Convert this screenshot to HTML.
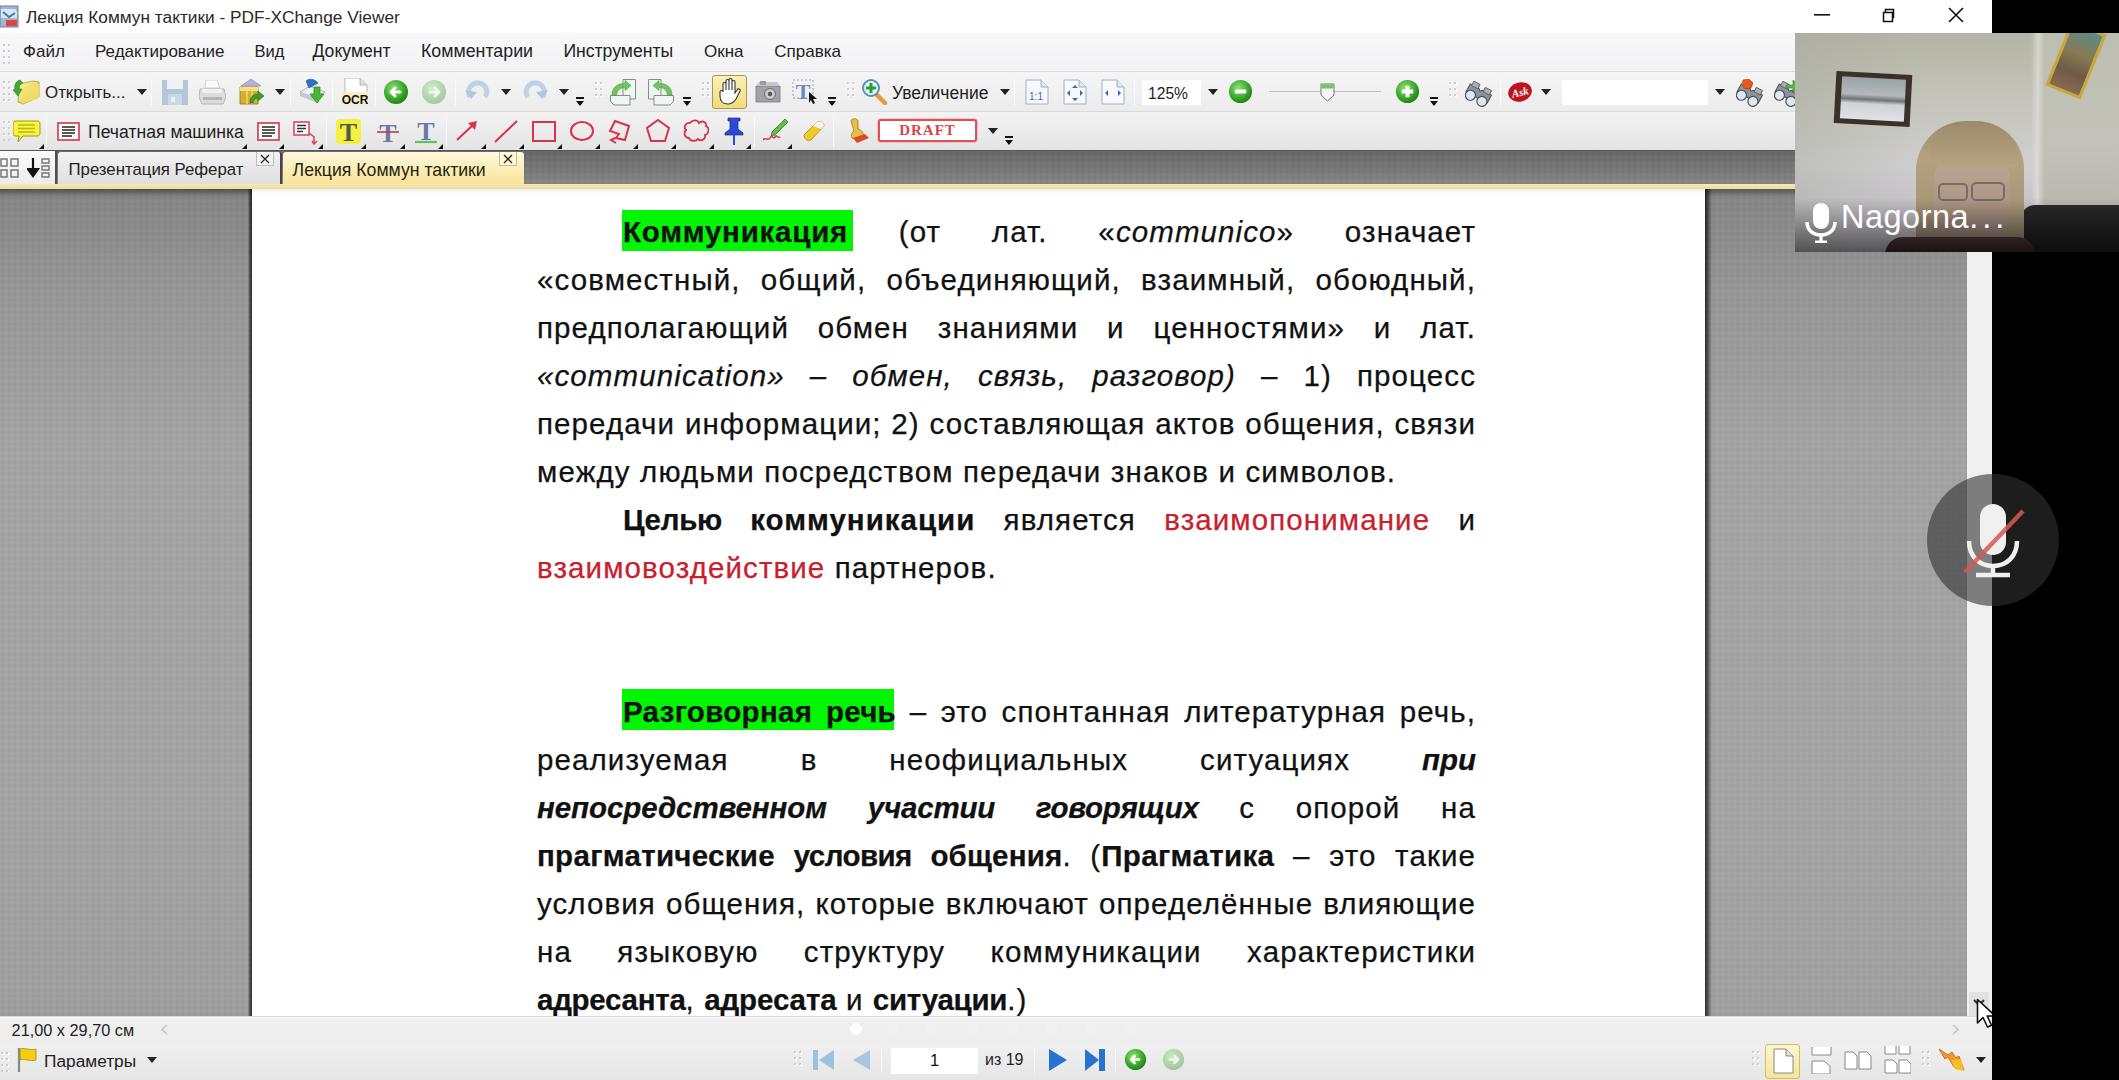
<!DOCTYPE html>
<html><head><meta charset="utf-8"><style>*{margin:0;padding:0;box-sizing:border-box}
html,body{width:2119px;height:1080px;overflow:hidden;background:#000}
body{position:relative;font-family:"Liberation Sans",sans-serif;color:#1e1e1e}
.a{position:absolute}
.tx{white-space:nowrap;line-height:1}
.ln{position:absolute;left:537px;width:939px;height:48px;font-size:29.5px;line-height:48px;letter-spacing:1.1px;white-space:nowrap;color:#111;-webkit-text-stroke:0.25px #111}
.j{text-align:justify;text-align-last:justify;white-space:normal}
.ind{left:623px;width:853px}
.b{font-weight:bold}
.i{font-style:italic}
.r{color:#c8202c;-webkit-text-stroke:0.25px #c8202c}
</style></head><body>
<div class="a" style="left:0;top:0;width:1992px;height:33px;background:#fff"></div>
<svg class="a" style="left:0px;top:5px;" width="19" height="23" viewBox="0 0 19 23"><rect x="0" y="1" width="18" height="21" fill="#9fb7d2" stroke="#6d7f94"/><path d="M1 4h14l2 3v6H1z" fill="#d8e6f2"/><path d="M3 7l6 5 6-4" stroke="#3f78b5" stroke-width="2" fill="none"/><rect x="6" y="15" width="11" height="6" fill="#d44"/></svg>
<div class="a tx" style="left:26px;top:9px;font-size:17.3px;color:#2a2a2a;">Лекция Коммун тактики - PDF-XChange Viewer</div>
<svg class="a" style="left:1814px;top:14px;" width="16" height="2" viewBox="0 0 16 2"><rect width="16" height="1.6" fill="#111"/></svg>
<svg class="a" style="left:1880px;top:7px;" width="16" height="16" viewBox="0 0 16 16"><path d="M3.5 5.5h9v9h-9z M5.5 5.5v-3h8v8h-1" fill="none" stroke="#111" stroke-width="1.5"/></svg>
<svg class="a" style="left:1948px;top:7px;" width="16" height="16" viewBox="0 0 16 16"><path d="M1 1L15 15M15 1L1 15" stroke="#111" stroke-width="1.6"/></svg>
<div class="a" style="left:0;top:33px;width:1992px;height:39px;background:linear-gradient(#f9f9fb,#f2f2f4);border-bottom:1px solid #dadada"></div>
<svg class="a" style="left:3px;top:44px;" width="8" height="20" viewBox="0 0 8 20"><rect x="1" y="1" width="2" height="2" fill="#fff"/><rect x="0" y="0" width="2" height="2" fill="#cdcdcd"/><rect x="6" y="1" width="2" height="2" fill="#fff"/><rect x="5" y="0" width="2" height="2" fill="#cdcdcd"/><rect x="1" y="7" width="2" height="2" fill="#fff"/><rect x="0" y="6" width="2" height="2" fill="#cdcdcd"/><rect x="6" y="7" width="2" height="2" fill="#fff"/><rect x="5" y="6" width="2" height="2" fill="#cdcdcd"/><rect x="1" y="13" width="2" height="2" fill="#fff"/><rect x="0" y="12" width="2" height="2" fill="#cdcdcd"/><rect x="6" y="13" width="2" height="2" fill="#fff"/><rect x="5" y="12" width="2" height="2" fill="#cdcdcd"/><rect x="1" y="19" width="2" height="2" fill="#fff"/><rect x="0" y="18" width="2" height="2" fill="#cdcdcd"/><rect x="6" y="19" width="2" height="2" fill="#fff"/><rect x="5" y="18" width="2" height="2" fill="#cdcdcd"/></svg>
<div class="a tx" style="left:23px;top:43.2px;font-size:17.0px;color:#222;">Файл</div>
<div class="a tx" style="left:95px;top:43.2px;font-size:17.0px;color:#222;">Редактирование</div>
<div class="a tx" style="left:254.5px;top:43.2px;font-size:16.5px;color:#222;">Вид</div>
<div class="a tx" style="left:312.5px;top:43.2px;font-size:17.6px;color:#222;">Документ</div>
<div class="a tx" style="left:421px;top:43.2px;font-size:17.8px;color:#222;">Комментарии</div>
<div class="a tx" style="left:563.4px;top:43.2px;font-size:17.6px;color:#222;">Инструменты</div>
<div class="a tx" style="left:704px;top:43.2px;font-size:17.0px;color:#222;">Окна</div>
<div class="a tx" style="left:774.3px;top:43.2px;font-size:17.0px;color:#222;">Справка</div>
<div class="a" style="left:0;top:72px;width:1992px;height:40px;background:linear-gradient(#f5f5f5,#ececec);border-bottom:1px solid #d9d9d9"></div>
<svg class="a" style="left:3px;top:81px;" width="8" height="22" viewBox="0 0 8 22"><rect x="1" y="1" width="2" height="2" fill="#fff"/><rect x="0" y="0" width="2" height="2" fill="#cdcdcd"/><rect x="6" y="1" width="2" height="2" fill="#fff"/><rect x="5" y="0" width="2" height="2" fill="#cdcdcd"/><rect x="1" y="7" width="2" height="2" fill="#fff"/><rect x="0" y="6" width="2" height="2" fill="#cdcdcd"/><rect x="6" y="7" width="2" height="2" fill="#fff"/><rect x="5" y="6" width="2" height="2" fill="#cdcdcd"/><rect x="1" y="13" width="2" height="2" fill="#fff"/><rect x="0" y="12" width="2" height="2" fill="#cdcdcd"/><rect x="6" y="13" width="2" height="2" fill="#fff"/><rect x="5" y="12" width="2" height="2" fill="#cdcdcd"/><rect x="1" y="19" width="2" height="2" fill="#fff"/><rect x="0" y="18" width="2" height="2" fill="#cdcdcd"/><rect x="6" y="19" width="2" height="2" fill="#fff"/><rect x="5" y="18" width="2" height="2" fill="#cdcdcd"/></svg>
<svg class="a" style="left:13px;top:78px;" width="28" height="28" viewBox="0 0 28 28"><defs><linearGradient id="fo" x1="0" y1="0" x2="1" y2="1"><stop offset="0" stop-color="#fff6a8"/><stop offset="1" stop-color="#d9c23a"/></linearGradient></defs>
<path d="M6 6l14-3 6 1v15l-16 7-5-2z" fill="url(#fo)" stroke="#b39c2a" stroke-width="0.8"/>
<path d="M9 10l17-4v14l-17 6z" fill="#f2e06a" opacity="0.8"/>
<path d="M7 2c-4 1-6 5-5 9l-2 1 5 6 4-7-3 0c0-3 1-5 4-6z" fill="#3faa36" stroke="#2a7f26" stroke-width="0.6"/></svg>
<div class="a tx" style="left:45px;top:84.5px;font-size:16.9px;color:#1e1e1e;">Открыть...</div>
<svg class="a" style="left:137px;top:89px;" width="10" height="6" viewBox="0 0 10 6"><path d="M0 0h10L5 6z" fill="#222"/></svg>
<div class="a" style="left:151px;top:78px;width:1px;height:28px;background:#d2d2d2;border-right:1px solid #fafafa"></div>
<svg class="a" style="left:162px;top:80px;" width="26" height="25" viewBox="0 0 26 25"><path d="M0 0h26v25H0z" fill="#b4c6d8"/><rect x="5" y="0" width="16" height="9" fill="#eef2f6"/><rect x="6" y="14" width="14" height="11" fill="#cbd8e4"/><rect x="9" y="17" width="4" height="5" fill="#e8eef4"/></svg>
<svg class="a" style="left:199px;top:80px;" width="27" height="25" viewBox="0 0 27 25"><path d="M7 0h11l3 8H6z" fill="#fbfbfd" stroke="#c2c2ca" stroke-width="0.8"/><path d="M1 9h24l2 8-3 7H3l-3-7z" fill="#dcdcdc" stroke="#a8a8a8" stroke-width="0.8"/><path d="M4 17h19v3H4z" fill="#b4b4b4"/><path d="M3 9h20v4H3z" fill="#f0f0f0"/></svg>
<svg class="a" style="left:238px;top:78px;" width="26" height="27" viewBox="0 0 26 27"><path d="M3 8L13 1l10 7z" fill="#b9b0d8" stroke="#8e85b0" stroke-width="0.6"/><path d="M2 9h18v17H2z" fill="#d8ae2e" stroke="#96701a" stroke-width="0.8"/><path d="M2 9h18v4H2z" fill="#f2df90"/><path d="M9 9v17M14 9v17" stroke="#ffe27a" stroke-width="1.2"/><path d="M12 25c0-6 3-9 8-9v-3l6 5-6 5v-3c-3 0-5 2-5 5z" fill="#3d9e33" stroke="#25701d" stroke-width="0.6"/></svg>
<svg class="a" style="left:275px;top:89px;" width="10" height="6" viewBox="0 0 10 6"><path d="M0 0h10L5 6z" fill="#222"/></svg>
<div class="a" style="left:290px;top:78px;width:1px;height:28px;background:#d2d2d2;border-right:1px solid #fafafa"></div>
<svg class="a" style="left:299px;top:78px;" width="27" height="28" viewBox="0 0 27 28"><path d="M1 14l10-6 15 6-10 6z" fill="#eef1f5" stroke="#9aa3ad" stroke-width="0.8"/><path d="M1 14v4l15 6v-4z" fill="#c2c8cf"/><path d="M7 3c3-3 9-2 12 2l-9 5z" fill="#2a74c8" stroke="#1c4e90" stroke-width="0.6"/><path d="M15 9h6v7h4l-7 9-7-9h4z" fill="#49b43a" stroke="#2a7d22" stroke-width="0.7"/></svg>
<div class="a" style="left:332px;top:78px;width:1px;height:28px;background:#d2d2d2;border-right:1px solid #fafafa"></div>
<svg class="a" style="left:342px;top:78px;" width="26" height="27" viewBox="0 0 26 27"><path d="M3 0h15l7 7v12H3z" fill="#fff" stroke="#aaa" stroke-width="0.8"/><path d="M18 0v7h7" fill="#ddd" stroke="#aaa" stroke-width="0.8"/><rect x="0" y="14" width="26" height="13" fill="#f6ecc6"/><text x="13" y="25.5" text-anchor="middle" font-family="Liberation Sans" font-weight="bold" font-size="12" fill="#111">OCR</text></svg>
<div class="a" style="left:375px;top:78px;width:1px;height:28px;background:#d2d2d2;border-right:1px solid #fafafa"></div>
<svg class="a" style="left:383px;top:79px;" width="26" height="26" viewBox="0 0 26 26"><defs><radialGradient id="gc38379" cx="40%" cy="35%" r="70%"><stop offset="0" stop-color="#8fe27a"/><stop offset="0.6" stop-color="#3daa2c"/><stop offset="1" stop-color="#1d7a14"/></radialGradient></defs><g opacity="1"><circle cx="13" cy="13" r="12" fill="url(#gc38379)"/><path d="M17 13H9M12 9l-4 4 4 4" stroke="#fff" stroke-width="3" fill="none" stroke-linecap="round" stroke-linejoin="round"/></g></svg>
<svg class="a" style="left:421px;top:79px;" width="26" height="26" viewBox="0 0 26 26"><defs><radialGradient id="gc42179" cx="40%" cy="35%" r="70%"><stop offset="0" stop-color="#8fe27a"/><stop offset="0.6" stop-color="#3daa2c"/><stop offset="1" stop-color="#1d7a14"/></radialGradient></defs><g opacity="0.35"><circle cx="13" cy="13" r="12" fill="url(#gc42179)"/><path d="M9 13h8M14 9l4 4-4 4" stroke="#fff" stroke-width="3" fill="none" stroke-linecap="round" stroke-linejoin="round"/></g></svg>
<div class="a" style="left:455px;top:78px;width:1px;height:28px;background:#d2d2d2;border-right:1px solid #fafafa"></div>
<svg class="a" style="left:465px;top:80px;opacity:.9" width="26" height="24" viewBox="0 0 26 24"><path d="M5 17c-4-8 2-15 9-14 7 1 10 9 6 14" fill="none" stroke="#b8cfe6" stroke-width="5"/><path d="M0 10l6 9 6-7z" fill="#a8c2de"/></svg>
<svg class="a" style="left:501px;top:89px;" width="10" height="6" viewBox="0 0 10 6"><path d="M0 0h10L5 6z" fill="#222"/></svg>
<svg class="a" style="left:522px;top:80px;opacity:.9" width="26" height="24" viewBox="0 0 26 24"><path d="M21 17c4-8-2-15-9-14-7 1-10 9-6 14" fill="none" stroke="#b8cfe6" stroke-width="5"/><path d="M26 10l-6 9-6-7z" fill="#a8c2de"/></svg>
<svg class="a" style="left:559px;top:89px;" width="10" height="6" viewBox="0 0 10 6"><path d="M0 0h10L5 6z" fill="#222"/></svg>
<svg class="a" style="left:575px;top:97px;" width="10" height="10" viewBox="0 0 10 10"><rect x="1" y="0" width="8" height="2" fill="#111"/><path d="M1 4h8L5 9z" fill="#111"/></svg>
<svg class="a" style="left:595px;top:82px;" width="8" height="18" viewBox="0 0 8 18"><rect x="1" y="1" width="2" height="2" fill="#fff"/><rect x="0" y="0" width="2" height="2" fill="#cdcdcd"/><rect x="6" y="1" width="2" height="2" fill="#fff"/><rect x="5" y="0" width="2" height="2" fill="#cdcdcd"/><rect x="1" y="7" width="2" height="2" fill="#fff"/><rect x="0" y="6" width="2" height="2" fill="#cdcdcd"/><rect x="6" y="7" width="2" height="2" fill="#fff"/><rect x="5" y="6" width="2" height="2" fill="#cdcdcd"/><rect x="1" y="13" width="2" height="2" fill="#fff"/><rect x="0" y="12" width="2" height="2" fill="#cdcdcd"/><rect x="6" y="13" width="2" height="2" fill="#fff"/><rect x="5" y="12" width="2" height="2" fill="#cdcdcd"/><rect x="1" y="19" width="2" height="2" fill="#fff"/><rect x="0" y="18" width="2" height="2" fill="#cdcdcd"/><rect x="6" y="19" width="2" height="2" fill="#fff"/><rect x="5" y="18" width="2" height="2" fill="#cdcdcd"/></svg>
<svg class="a" style="left:610px;top:79px;" width="27" height="27" viewBox="0 0 27 27"><g ><path d="M13 0.5h12.5v19.5H13z" fill="#eef6f4" stroke="#8a8a8a" stroke-width="1"/><path d="M0.5 16.5h19.5v9.5H4l-3.5-3.5z" fill="#f2f6f6" stroke="#8a8a8a" stroke-width="1"/><path d="M2 16c0-8 6-12 13-11.5V1.5l6 5-6 5V8.5c-5 0-8 3-8.5 7.5z" fill="#62c24e" stroke="#3e9a32" stroke-width="0.6" opacity=".9"/></g></svg>
<svg class="a" style="left:647px;top:79px;" width="27" height="27" viewBox="0 0 27 27"><g transform="translate(27 0) scale(-1 1)"><path d="M13 0.5h12.5v19.5H13z" fill="#eef6f4" stroke="#8a8a8a" stroke-width="1"/><path d="M0.5 16.5h19.5v9.5H4l-3.5-3.5z" fill="#f2f6f6" stroke="#8a8a8a" stroke-width="1"/><path d="M2 16c0-8 6-12 13-11.5V1.5l6 5-6 5V8.5c-5 0-8 3-8.5 7.5z" fill="#62c24e" stroke="#3e9a32" stroke-width="0.6" opacity=".9"/></g></svg>
<svg class="a" style="left:682px;top:97px;" width="10" height="10" viewBox="0 0 10 10"><rect x="1" y="0" width="8" height="2" fill="#111"/><path d="M1 4h8L5 9z" fill="#111"/></svg>
<svg class="a" style="left:702px;top:82px;" width="8" height="18" viewBox="0 0 8 18"><rect x="1" y="1" width="2" height="2" fill="#fff"/><rect x="0" y="0" width="2" height="2" fill="#cdcdcd"/><rect x="6" y="1" width="2" height="2" fill="#fff"/><rect x="5" y="0" width="2" height="2" fill="#cdcdcd"/><rect x="1" y="7" width="2" height="2" fill="#fff"/><rect x="0" y="6" width="2" height="2" fill="#cdcdcd"/><rect x="6" y="7" width="2" height="2" fill="#fff"/><rect x="5" y="6" width="2" height="2" fill="#cdcdcd"/><rect x="1" y="13" width="2" height="2" fill="#fff"/><rect x="0" y="12" width="2" height="2" fill="#cdcdcd"/><rect x="6" y="13" width="2" height="2" fill="#fff"/><rect x="5" y="12" width="2" height="2" fill="#cdcdcd"/><rect x="1" y="19" width="2" height="2" fill="#fff"/><rect x="0" y="18" width="2" height="2" fill="#cdcdcd"/><rect x="6" y="19" width="2" height="2" fill="#fff"/><rect x="5" y="18" width="2" height="2" fill="#cdcdcd"/></svg>
<div class="a" style="left:712px;top:75px;width:35px;height:34px;border:1.5px solid #a8955a;border-radius:3px;background:linear-gradient(#fbf1b8,#f2dc78)"></div>
<svg class="a" style="left:717px;top:78px;" width="26" height="28" viewBox="0 0 26 28"><path d="M6 13V6c0-2 3-2 3 0v6V3c0-2 3-2 3 0v9V2c0-2 3-2 3 0v10V4c0-2 3-2 3 0v11l2-3c1-2 4-1 3 1l-4 8c-2 3-4 5-8 5-5 0-8-3-8-8v-4c0-2 3-2 3 0z" fill="#fff" stroke="#333" stroke-width="1.1"/></svg>
<svg class="a" style="left:755px;top:80px;" width="26" height="24" viewBox="0 0 26 24"><path d="M1 6h24v16H1z" fill="#a2a2aa" stroke="#76767e" stroke-width="0.8"/><path d="M1 6l3-4h18l3 4z" fill="#c6c6cc"/><rect x="5" y="1" width="6" height="4" fill="#9a9aa2"/><circle cx="15" cy="14" r="5.5" fill="#c8c8ce" stroke="#6a6a70" stroke-width="1"/><circle cx="15" cy="14" r="2.2" fill="#555"/></svg>
<svg class="a" style="left:792px;top:78px;" width="26" height="27" viewBox="0 0 26 27"><rect x="1" y="2" width="20" height="18" fill="none" stroke="#8aa0c0" stroke-dasharray="2 2"/><text x="11" y="21" text-anchor="middle" font-family="Liberation Serif" font-weight="bold" font-size="22" fill="#6a8ac0">T</text><path d="M17 14l8 7-4 0 2 4-2 1-2-4-2 3z" fill="#111"/></svg>
<svg class="a" style="left:827px;top:97px;" width="10" height="10" viewBox="0 0 10 10"><rect x="1" y="0" width="8" height="2" fill="#111"/><path d="M1 4h8L5 9z" fill="#111"/></svg>
<svg class="a" style="left:847px;top:82px;" width="8" height="18" viewBox="0 0 8 18"><rect x="1" y="1" width="2" height="2" fill="#fff"/><rect x="0" y="0" width="2" height="2" fill="#cdcdcd"/><rect x="6" y="1" width="2" height="2" fill="#fff"/><rect x="5" y="0" width="2" height="2" fill="#cdcdcd"/><rect x="1" y="7" width="2" height="2" fill="#fff"/><rect x="0" y="6" width="2" height="2" fill="#cdcdcd"/><rect x="6" y="7" width="2" height="2" fill="#fff"/><rect x="5" y="6" width="2" height="2" fill="#cdcdcd"/><rect x="1" y="13" width="2" height="2" fill="#fff"/><rect x="0" y="12" width="2" height="2" fill="#cdcdcd"/><rect x="6" y="13" width="2" height="2" fill="#fff"/><rect x="5" y="12" width="2" height="2" fill="#cdcdcd"/><rect x="1" y="19" width="2" height="2" fill="#fff"/><rect x="0" y="18" width="2" height="2" fill="#cdcdcd"/><rect x="6" y="19" width="2" height="2" fill="#fff"/><rect x="5" y="18" width="2" height="2" fill="#cdcdcd"/></svg>
<svg class="a" style="left:861px;top:78px;" width="27" height="27" viewBox="0 0 27 27"><path d="M15 16l9 9" stroke="#e39a3a" stroke-width="4.5" stroke-linecap="round"/><circle cx="10" cy="10" r="8" fill="#e7f3fb" stroke="#5d8fb2" stroke-width="2"/><path d="M10 5v10M5 10h10" stroke="#23a12c" stroke-width="3"/></svg>
<div class="a tx" style="left:892px;top:84.5px;font-size:17.5px;color:#1e1e1e;">Увеличение</div>
<svg class="a" style="left:1000px;top:89px;" width="10" height="6" viewBox="0 0 10 6"><path d="M0 0h10L5 6z" fill="#222"/></svg>
<div class="a" style="left:1014px;top:78px;width:1px;height:28px;background:#d2d2d2;border-right:1px solid #fafafa"></div>
<svg class="a" style="left:1025px;top:79px;" width="24" height="26" viewBox="0 0 24 26"><path d="M1 1h15l7 7v17H1z" fill="#f7f9fc" stroke="#9eb0c6" stroke-width="1"/><path d="M16 1v7h7" fill="#dfe7f0" stroke="#9eb0c6" stroke-width="1"/><text x="11" y="21" text-anchor="middle" font-family="Liberation Sans" font-size="10" fill="#3a6ab0">1:1</text></svg>
<svg class="a" style="left:1063px;top:79px;" width="24" height="26" viewBox="0 0 24 26"><path d="M1 1h15l7 7v17H1z" fill="#f7f9fc" stroke="#9eb0c6" stroke-width="1"/><path d="M16 1v7h7" fill="#dfe7f0" stroke="#9eb0c6" stroke-width="1"/><path d="M12 6l3 3h-6zM12 22l3-3h-6zM4 14l3-3v6zM20 14l-3-3v6z" fill="#3a6ab0"/></svg>
<svg class="a" style="left:1101px;top:79px;" width="24" height="26" viewBox="0 0 24 26"><path d="M1 1h15l7 7v17H1z" fill="#f7f9fc" stroke="#9eb0c6" stroke-width="1"/><path d="M16 1v7h7" fill="#dfe7f0" stroke="#9eb0c6" stroke-width="1"/><path d="M4 14l3-3v6zM20 14l-3-3v6z" fill="#3a6ab0"/></svg>
<div class="a" style="left:1134px;top:78px;width:1px;height:28px;background:#d2d2d2;border-right:1px solid #fafafa"></div>
<div class="a" style="left:1142px;top:80px;width:59px;height:25px;background:#fff"></div>
<div class="a tx" style="left:1148px;top:84.5px;font-size:15.6px;color:#1e1e1e;font-size:17px;transform:scaleX(.92);transform-origin:0 0">125%</div>
<svg class="a" style="left:1208px;top:89px;" width="10" height="6" viewBox="0 0 10 6"><path d="M0 0h10L5 6z" fill="#222"/></svg>
<svg class="a" style="left:1228px;top:79px;" width="25" height="25" viewBox="0 0 26 26"><defs><radialGradient id="gc122879" cx="40%" cy="35%" r="70%"><stop offset="0" stop-color="#8fe27a"/><stop offset="0.6" stop-color="#3daa2c"/><stop offset="1" stop-color="#1d7a14"/></radialGradient></defs><g opacity="1"><circle cx="13" cy="13" r="12" fill="url(#gc122879)"/><rect x="7" y="11" width="12" height="4" rx="1" fill="#fff"/></g></svg>
<div class="a" style="left:1269px;top:91px;width:112px;height:1px;background:#bdbdbd"></div>
<svg class="a" style="left:1320px;top:83px;" width="15" height="19" viewBox="0 0 15 19"><path d="M1 1h13v11l-6.5 6L1 12z" fill="#f4f4f4" stroke="#777" stroke-width="1"/><rect x="1.5" y="1.5" width="12" height="4" fill="#7ac26a"/></svg>
<svg class="a" style="left:1395px;top:79px;" width="25" height="25" viewBox="0 0 26 26"><defs><radialGradient id="gc139579" cx="40%" cy="35%" r="70%"><stop offset="0" stop-color="#8fe27a"/><stop offset="0.6" stop-color="#3daa2c"/><stop offset="1" stop-color="#1d7a14"/></radialGradient></defs><g opacity="1"><circle cx="13" cy="13" r="12" fill="url(#gc139579)"/><path d="M13 7v12M7 13h12" stroke="#fff" stroke-width="4"/></g></svg>
<svg class="a" style="left:1429px;top:97px;" width="10" height="10" viewBox="0 0 10 10"><rect x="1" y="0" width="8" height="2" fill="#111"/><path d="M1 4h8L5 9z" fill="#111"/></svg>
<svg class="a" style="left:1449px;top:82px;" width="8" height="18" viewBox="0 0 8 18"><rect x="1" y="1" width="2" height="2" fill="#fff"/><rect x="0" y="0" width="2" height="2" fill="#cdcdcd"/><rect x="6" y="1" width="2" height="2" fill="#fff"/><rect x="5" y="0" width="2" height="2" fill="#cdcdcd"/><rect x="1" y="7" width="2" height="2" fill="#fff"/><rect x="0" y="6" width="2" height="2" fill="#cdcdcd"/><rect x="6" y="7" width="2" height="2" fill="#fff"/><rect x="5" y="6" width="2" height="2" fill="#cdcdcd"/><rect x="1" y="13" width="2" height="2" fill="#fff"/><rect x="0" y="12" width="2" height="2" fill="#cdcdcd"/><rect x="6" y="13" width="2" height="2" fill="#fff"/><rect x="5" y="12" width="2" height="2" fill="#cdcdcd"/><rect x="1" y="19" width="2" height="2" fill="#fff"/><rect x="0" y="18" width="2" height="2" fill="#cdcdcd"/><rect x="6" y="19" width="2" height="2" fill="#fff"/><rect x="5" y="18" width="2" height="2" fill="#cdcdcd"/></svg>
<svg class="a" style="left:1465px;top:79px;" width="28" height="28" viewBox="0 0 28 28"><g transform="rotate(28 14 14)"><path d="M2 10h10l2 2 2-2h10v9H2z" fill="#8c939c" stroke="#4a5058" stroke-width="1"/><rect x="4" y="6" width="7" height="5" fill="#aab0b8" stroke="#555" stroke-width="0.8"/><rect x="17" y="6" width="7" height="5" fill="#aab0b8" stroke="#555" stroke-width="0.8"/><circle cx="7.5" cy="20" r="5" fill="#dfe8f0" stroke="#4a5058" stroke-width="1.2"/><circle cx="20.5" cy="20" r="5" fill="#dfe8f0" stroke="#4a5058" stroke-width="1.2"/></g></svg>
<div class="a" style="left:1500px;top:78px;width:1px;height:28px;background:#d2d2d2;border-right:1px solid #fafafa"></div>
<svg class="a" style="left:1507px;top:81px;" width="26" height="22" viewBox="0 0 26 22"><ellipse cx="13" cy="11" rx="12" ry="9.5" fill="#b8161e" transform="rotate(-15 13 11)"/><text x="13" y="15" text-anchor="middle" font-family="Liberation Serif" font-style="italic" font-weight="bold" font-size="11" fill="#fff" transform="rotate(-12 13 11)">Ask</text></svg>
<svg class="a" style="left:1541px;top:89px;" width="10" height="6" viewBox="0 0 10 6"><path d="M0 0h10L5 6z" fill="#222"/></svg>
<div class="a" style="left:1562px;top:80px;width:146px;height:25px;background:#fff"></div>
<svg class="a" style="left:1715px;top:89px;" width="10" height="6" viewBox="0 0 10 6"><path d="M0 0h10L5 6z" fill="#222"/></svg>
<svg class="a" style="left:1736px;top:79px;" width="28" height="28" viewBox="0 0 28 28"><g transform="rotate(28 14 14)"><path d="M2 10h10l2 2 2-2h10v9H2z" fill="#8c939c" stroke="#4a5058" stroke-width="1"/><rect x="4" y="6" width="7" height="5" fill="#aab0b8" stroke="#555" stroke-width="0.8"/><rect x="17" y="6" width="7" height="5" fill="#aab0b8" stroke="#555" stroke-width="0.8"/><circle cx="7.5" cy="20" r="5" fill="#dfe8f0" stroke="#4a5058" stroke-width="1.2"/><circle cx="20.5" cy="20" r="5" fill="#dfe8f0" stroke="#4a5058" stroke-width="1.2"/></g><path d="M7 1l6-1 4 4-2 5-6 1-3-4z" fill="#e8581e" stroke="#a83a10" stroke-width="0.6"/></svg>
<svg class="a" style="left:1774px;top:79px;" width="28" height="28" viewBox="0 0 28 28"><g transform="rotate(28 14 14)"><path d="M2 10h10l2 2 2-2h10v9H2z" fill="#8c939c" stroke="#4a5058" stroke-width="1"/><rect x="4" y="6" width="7" height="5" fill="#aab0b8" stroke="#555" stroke-width="0.8"/><rect x="17" y="6" width="7" height="5" fill="#aab0b8" stroke="#555" stroke-width="0.8"/><circle cx="7.5" cy="20" r="5" fill="#dfe8f0" stroke="#4a5058" stroke-width="1.2"/><circle cx="20.5" cy="20" r="5" fill="#dfe8f0" stroke="#4a5058" stroke-width="1.2"/></g><path d="M12 6h7V1l7 6-7 6V9h-7z" fill="#52c040" stroke="#2a7a22" stroke-width="0.6"/></svg>
<div class="a" style="left:0;top:112px;width:1992px;height:38px;background:linear-gradient(#f3f3f3,#e4e4e4)"></div>
<svg class="a" style="left:3px;top:121px;" width="8" height="20" viewBox="0 0 8 20"><rect x="1" y="1" width="2" height="2" fill="#fff"/><rect x="0" y="0" width="2" height="2" fill="#cdcdcd"/><rect x="6" y="1" width="2" height="2" fill="#fff"/><rect x="5" y="0" width="2" height="2" fill="#cdcdcd"/><rect x="1" y="7" width="2" height="2" fill="#fff"/><rect x="0" y="6" width="2" height="2" fill="#cdcdcd"/><rect x="6" y="7" width="2" height="2" fill="#fff"/><rect x="5" y="6" width="2" height="2" fill="#cdcdcd"/><rect x="1" y="13" width="2" height="2" fill="#fff"/><rect x="0" y="12" width="2" height="2" fill="#cdcdcd"/><rect x="6" y="13" width="2" height="2" fill="#fff"/><rect x="5" y="12" width="2" height="2" fill="#cdcdcd"/><rect x="1" y="19" width="2" height="2" fill="#fff"/><rect x="0" y="18" width="2" height="2" fill="#cdcdcd"/><rect x="6" y="19" width="2" height="2" fill="#fff"/><rect x="5" y="18" width="2" height="2" fill="#cdcdcd"/></svg>
<svg class="a" style="left:13px;top:120px;" width="28" height="24" viewBox="0 0 28 24"><path d="M3 1h21c2 0 3 1 3 3v9c0 2-1 3-3 3H10l-5 6 1-6H3c-2 0-3-1-3-3V4c0-2 1-3 3-3z" fill="#f6f53a" stroke="#9a9a18" stroke-width="1"/><path d="M5 5h17M5 8.5h17M5 12h17" stroke="#b8b61c" stroke-width="1.3"/></svg>
<svg class="a" style="left:39px;top:144px;" width="5" height="5" viewBox="0 0 5 5"><path d="M5 0V5H0z" fill="#111"/></svg>
<div class="a" style="left:46px;top:117px;width:1px;height:30px;background:#d2d2d2;border-right:1px solid #fafafa"></div>
<svg class="a" style="left:57px;top:122px;" width="23" height="19" viewBox="0 0 23 19"><rect x="1" y="1" width="21" height="17" fill="#fdfdfd" stroke="#d64a5a" stroke-width="1.8"/><path d="M5 5h13M5 8h13M5 11h13M5 14h10" stroke="#222" stroke-width="1.6"/></svg>
<div class="a tx" style="left:88px;top:124px;font-size:17.6px;color:#1e1e1e;">Печатная машинка</div>
<svg class="a" style="left:242px;top:144px;" width="5" height="5" viewBox="0 0 5 5"><path d="M5 0V5H0z" fill="#111"/></svg>
<svg class="a" style="left:257px;top:122px;" width="23" height="19" viewBox="0 0 23 19"><rect x="1" y="1" width="21" height="17" fill="#fdfdfd" stroke="#d64a5a" stroke-width="1.8"/><path d="M5 5h13M5 8h13M5 11h13M5 14h10" stroke="#222" stroke-width="1.6"/></svg>
<svg class="a" style="left:279px;top:144px;" width="5" height="5" viewBox="0 0 5 5"><path d="M5 0V5H0z" fill="#111"/></svg>
<svg class="a" style="left:293px;top:121px;" width="26" height="24" viewBox="0 0 26 24"><rect x="1" y="1" width="15" height="13" fill="#fff" stroke="#d64a5a" stroke-width="1.6"/><path d="M4 4.5h9M4 7.5h9M4 10.5h6" stroke="#333" stroke-width="1.3"/><path d="M16 12l5 4v6M19 20l2 3 3-3" fill="none" stroke="#d64a5a" stroke-width="1.6"/></svg>
<svg class="a" style="left:318px;top:144px;" width="5" height="5" viewBox="0 0 5 5"><path d="M5 0V5H0z" fill="#111"/></svg>
<div class="a" style="left:326px;top:117px;width:1px;height:30px;background:#d2d2d2;border-right:1px solid #fafafa"></div>
<svg class="a" style="left:335px;top:118px;" width="27" height="27" viewBox="0 0 27 27"><rect x="1" y="1" width="25" height="25" rx="4" fill="#f2f040"/><text x="13.5" y="23" text-anchor="middle" font-family="Liberation Serif" font-weight="bold" font-size="26" fill="#55584a">T</text></svg>
<svg class="a" style="left:361px;top:144px;" width="5" height="5" viewBox="0 0 5 5"><path d="M5 0V5H0z" fill="#111"/></svg>
<svg class="a" style="left:375px;top:118px;" width="26" height="27" viewBox="0 0 26 27"><text x="13" y="24" text-anchor="middle" font-family="Liberation Serif" font-weight="bold" font-size="26" fill="#6a78a8">T</text><path d="M2 14h22" stroke="#c23a4a" stroke-width="1.6"/></svg>
<svg class="a" style="left:400px;top:144px;" width="5" height="5" viewBox="0 0 5 5"><path d="M5 0V5H0z" fill="#111"/></svg>
<svg class="a" style="left:413px;top:118px;" width="26" height="27" viewBox="0 0 26 27"><text x="13" y="22" text-anchor="middle" font-family="Liberation Serif" font-weight="bold" font-size="26" fill="#6a78a8">T</text><path d="M2 24h22" stroke="#5cc45a" stroke-width="2.2"/></svg>
<svg class="a" style="left:438px;top:144px;" width="5" height="5" viewBox="0 0 5 5"><path d="M5 0V5H0z" fill="#111"/></svg>
<div class="a" style="left:446px;top:117px;width:1px;height:30px;background:#d2d2d2;border-right:1px solid #fafafa"></div>
<svg class="a" style="left:455px;top:118px;" width="26" height="27" viewBox="0 0 26 27"><path d="M2 22L20 5" stroke="#d9334a" stroke-width="2"/><path d="M22 3l-9 2 7 7z" fill="#d9334a"/></svg>
<svg class="a" style="left:481px;top:144px;" width="5" height="5" viewBox="0 0 5 5"><path d="M5 0V5H0z" fill="#111"/></svg>
<svg class="a" style="left:493px;top:118px;" width="26" height="27" viewBox="0 0 26 27"><path d="M2 24L24 3" stroke="#d9334a" stroke-width="2"/></svg>
<svg class="a" style="left:519px;top:144px;" width="5" height="5" viewBox="0 0 5 5"><path d="M5 0V5H0z" fill="#111"/></svg>
<svg class="a" style="left:531px;top:118px;" width="26" height="27" viewBox="0 0 26 27"><rect x="2" y="4" width="22" height="19" fill="none" stroke="#d9334a" stroke-width="2"/></svg>
<svg class="a" style="left:557px;top:144px;" width="5" height="5" viewBox="0 0 5 5"><path d="M5 0V5H0z" fill="#111"/></svg>
<svg class="a" style="left:569px;top:118px;" width="26" height="27" viewBox="0 0 26 27"><ellipse cx="13" cy="13" rx="11" ry="9" fill="none" stroke="#d9334a" stroke-width="2"/></svg>
<svg class="a" style="left:595px;top:144px;" width="5" height="5" viewBox="0 0 5 5"><path d="M5 0V5H0z" fill="#111"/></svg>
<svg class="a" style="left:607px;top:118px;" width="26" height="27" viewBox="0 0 26 27"><path d="M8 3l14 5-4 14-9-2 3-4-9-3z M8 20l-4 2 5 3" fill="none" stroke="#d9334a" stroke-width="2"/></svg>
<svg class="a" style="left:633px;top:144px;" width="5" height="5" viewBox="0 0 5 5"><path d="M5 0V5H0z" fill="#111"/></svg>
<svg class="a" style="left:645px;top:118px;" width="26" height="27" viewBox="0 0 26 27"><path d="M13 2l11 8-4 13H6L2 10z" fill="none" stroke="#d9334a" stroke-width="2"/></svg>
<svg class="a" style="left:671px;top:144px;" width="5" height="5" viewBox="0 0 5 5"><path d="M5 0V5H0z" fill="#111"/></svg>
<svg class="a" style="left:683px;top:118px;" width="26" height="27" viewBox="0 0 26 27"><path d="M7 5c3-4 8-3 9 0 3-3 8-1 7 3 4 2 3 8-1 9 1 4-4 7-7 4-3 3-8 2-9-1-4 0-6-5-3-8-3-3 0-8 4-7z" fill="none" stroke="#d9334a" stroke-width="1.8"/></svg>
<svg class="a" style="left:709px;top:144px;" width="5" height="5" viewBox="0 0 5 5"><path d="M5 0V5H0z" fill="#111"/></svg>
<svg class="a" style="left:722px;top:117px;" width="24" height="29" viewBox="0 0 24 29"><path d="M6 1h12v3h-2v8l5 4v2H3v-2l5-4V4H6z" fill="#2f49d6" stroke="#1a2a8a" stroke-width="0.7"/><path d="M11 18h2v10h-2z" fill="#2f49d6"/></svg>
<svg class="a" style="left:746px;top:144px;" width="5" height="5" viewBox="0 0 5 5"><path d="M5 0V5H0z" fill="#111"/></svg>
<div class="a" style="left:754px;top:117px;width:1px;height:30px;background:#d2d2d2;border-right:1px solid #fafafa"></div>
<svg class="a" style="left:763px;top:118px;" width="26" height="27" viewBox="0 0 26 27"><path d="M9 14L22 1l3 3-13 13-4 1z" fill="#5fbf4e" stroke="#2d7a22" stroke-width="0.8"/><path d="M0 22c3-4 5 2 7-2s3 2 5-1 3 2 5 0" fill="none" stroke="#d9334a" stroke-width="1.5"/></svg>
<svg class="a" style="left:787px;top:144px;" width="5" height="5" viewBox="0 0 5 5"><path d="M5 0V5H0z" fill="#111"/></svg>
<svg class="a" style="left:801px;top:118px;" width="26" height="26" viewBox="0 0 26 26"><path d="M3 17L15 5c3-3 8-1 8 3L11 21c-3 3-8 1-8-4z" fill="#f0c828" stroke="#a88a10" stroke-width="0.8"/><path d="M15 5c3-3 8-1 8 3l-3 3-8-3z" fill="#f4f4f4"/></svg>
<div class="a" style="left:833px;top:117px;width:1px;height:30px;background:#d2d2d2;border-right:1px solid #fafafa"></div>
<svg class="a" style="left:845px;top:118px;" width="25" height="26" viewBox="0 0 25 26"><path d="M6 3c0-3 7-3 7 0v8c4 1 6 4 5 7l-10 3c-2-2-3-5 1-8z" fill="#e8be45" stroke="#9a7a18" stroke-width="0.8"/><path d="M8 20l12-4 4 4-12 5z" fill="#d94a2a"/></svg>
<div class="a" style="left:878px;top:119px;width:99px;height:23px;background:#fff;border:2.5px solid #d9535a;border-radius:3px;box-shadow:0 0 0 1px #f0c0c0"></div>
<div class="a tx" style="left:880px;top:123px;font-size:15px;color:#d8434a;width:95px;text-align:center;font-family:'Liberation Serif';font-weight:bold;letter-spacing:1px">DRAFT</div>
<svg class="a" style="left:988px;top:128px;" width="10" height="6" viewBox="0 0 10 6"><path d="M0 0h10L5 6z" fill="#222"/></svg>
<svg class="a" style="left:1004px;top:136px;" width="10" height="10" viewBox="0 0 10 10"><rect x="1" y="0" width="8" height="2" fill="#111"/><path d="M1 4h8L5 9z" fill="#111"/></svg>
<div class="a" style="left:0;top:149.5px;width:1992px;height:1.5px;background:#555"></div>
<div class="a" style="left:0;top:151px;width:1992px;height:34px;background:radial-gradient(circle,rgba(0,0,0,.04) 1.2px,rgba(0,0,0,0) 1.7px) 0 0/6px 6px,radial-gradient(circle,rgba(255,255,255,.04) 1.2px,rgba(255,255,255,0) 1.7px) 3px 3px/6px 6px,linear-gradient(#676767,#7a7a7a 60%,#868686)"></div>
<div class="a" style="left:0;top:151px;width:57px;height:34px;background:linear-gradient(#fafafa,#ececec);border-right:2px solid #505050"></div>
<svg class="a" style="left:0px;top:157px;" width="20" height="22" viewBox="0 0 20 22"><path d="M1 2h6v7H1zM11 2h7v7h-7zM1 13h6v7H1zM11 13h7v7h-7z" fill="none" stroke="#777" stroke-width="1.5"/></svg>
<svg class="a" style="left:27px;top:157px;" width="26" height="23" viewBox="0 0 26 23"><path d="M6 1v16M1 12l5 7 5-7z" stroke="#111" stroke-width="2.2" fill="#111"/><path d="M15 2h7v4h-7zM15 9h7v4h-7zM15 16h7v4h-7z" fill="none" stroke="#777" stroke-width="1.4"/></svg>
<div class="a" style="left:58px;top:152px;width:224px;height:33px;background:linear-gradient(#f2f2f2,#dedede);border-right:2px solid #454545;border-radius:3px 3px 0 0"></div>
<div class="a tx" style="left:68.5px;top:162px;font-size:16.8px;color:#222;">Презентация Реферат</div>
<div class="a" style="left:256px;top:152px;width:18px;height:14px;border:1px solid #bdbdbd;border-top:none;background:#f4f4f4"></div>
<svg class="a" style="left:260px;top:154px;" width="10" height="10" viewBox="0 0 10 10"><path d="M1 1l8 8M9 1l-8 8" stroke="#222" stroke-width="1.3"/></svg>
<div class="a" style="left:283px;top:152px;width:241px;height:33px;background:linear-gradient(#fdf8e0,#fbeeb8 50%,#f8e39a);border-radius:3px 3px 0 0"></div>
<div class="a tx" style="left:292.6px;top:162px;font-size:17.7px;color:#2a2410;">Лекция Коммун тактики</div>
<div class="a" style="left:499px;top:152px;width:18px;height:14px;border:1px solid #c8bc8c;border-top:none;background:#fdf6d8"></div>
<svg class="a" style="left:503px;top:154px;" width="10" height="10" viewBox="0 0 10 10"><path d="M1 1l8 8M9 1l-8 8" stroke="#222" stroke-width="1.3"/></svg>
<div class="a" style="left:0;top:184px;width:1992px;height:5px;background:linear-gradient(#f8eab0,#ecdba0)"></div>
<div class="a" style="left:0;top:189px;width:252px;height:828px;background:radial-gradient(circle,rgba(0,0,0,.04) 1.2px,rgba(0,0,0,0) 1.7px) 0 0/6px 6px,radial-gradient(circle,rgba(255,255,255,.04) 1.2px,rgba(255,255,255,0) 1.7px) 3px 3px/6px 6px,linear-gradient(#848484,#979797 13%,#a3a3a3 31%,#a3a3a3 75%,#9e9e9e)"></div>
<div class="a" style="left:0;top:189px;width:252px;height:8px;background:linear-gradient(rgba(40,40,30,.55),rgba(40,40,30,0))"></div>
<div class="a" style="left:248px;top:189px;width:4px;height:828px;background:linear-gradient(90deg,rgba(0,0,0,0),rgba(0,0,0,.45) 40%,rgba(0,0,0,.75))"></div>
<div class="a" style="left:1705px;top:189px;width:262px;height:828px;background:radial-gradient(circle,rgba(0,0,0,.04) 1.2px,rgba(0,0,0,0) 1.7px) 0 0/6px 6px,radial-gradient(circle,rgba(255,255,255,.04) 1.2px,rgba(255,255,255,0) 1.7px) 3px 3px/6px 6px,linear-gradient(#848484,#979797 13%,#a3a3a3 31%,#a4a4a4 75%,#a0a0a0)"></div>
<div class="a" style="left:1705px;top:189px;width:262px;height:8px;background:linear-gradient(rgba(40,40,30,.5),rgba(40,40,30,0))"></div>
<div class="a" style="left:1705px;top:189px;width:7px;height:828px;background:linear-gradient(90deg,rgba(0,0,0,.75),rgba(0,0,0,.55) 30%,rgba(0,0,0,0))"></div>
<div class="a" style="left:252px;top:189px;width:1453px;height:828px;background:#fff"></div>
<div class="a" style="left:252px;top:189px;width:1453px;height:5px;background:linear-gradient(#efefec,#fff)"></div>
<div class="a" style="left:1967px;top:189px;width:25px;height:828px;background:#f0f0f1"></div>
<div class="a" style="left:1969px;top:992px;width:20px;height:24px;background:#e2e2e4"></div>
<svg class="a" style="left:1973px;top:999px;" width="12" height="8" viewBox="0 0 12 8"><path d="M1 1l5 5 5-5" stroke="#333" stroke-width="2" fill="none"/></svg>
<div class="a" style="left:0;top:1016px;width:1992px;height:29px;background:linear-gradient(#f8f8f8,#efefef 10%,#ededed);border-top:1px solid #d8d8d8"></div>
<div class="a tx" style="left:11.6px;top:1022px;font-size:16.3px;color:#222;">21,00 x 29,70 см</div>
<svg class="a" style="left:160px;top:1024px;" width="9" height="11" viewBox="0 0 9 11"><path d="M7 1L2 5.5 7 10" stroke="#c4c4c4" stroke-width="1.6" fill="none"/></svg>
<svg class="a" style="left:1951px;top:1024px;" width="9" height="11" viewBox="0 0 9 11"><path d="M2 1l5 4.5L2 10" stroke="#c4c4c4" stroke-width="1.6" fill="none"/></svg>
<div class="a" style="left:850px;top:1023px;width:12px;height:12px;border-radius:50%;background:rgba(255,255,255,0.85)"></div>
<div class="a" style="left:887px;top:1023px;width:12px;height:12px;border-radius:50%;background:rgba(255,255,255,0.12)"></div>
<div class="a" style="left:925px;top:1023px;width:12px;height:12px;border-radius:50%;background:rgba(255,255,255,0.12)"></div>
<div class="a" style="left:967px;top:1023px;width:12px;height:12px;border-radius:50%;background:rgba(255,255,255,0.12)"></div>
<div class="a" style="left:1007px;top:1023px;width:12px;height:12px;border-radius:50%;background:rgba(255,255,255,0.12)"></div>
<div class="a" style="left:1046px;top:1023px;width:12px;height:12px;border-radius:50%;background:rgba(255,255,255,0.12)"></div>
<div class="a" style="left:1085px;top:1023px;width:12px;height:12px;border-radius:50%;background:rgba(255,255,255,0.12)"></div>
<div class="a" style="left:1124px;top:1023px;width:12px;height:12px;border-radius:50%;background:rgba(255,255,255,0.12)"></div>
<div class="a" style="left:0;top:1045px;width:1992px;height:35px;background:linear-gradient(#efefef,#e6e6e6)"></div>
<svg class="a" style="left:1px;top:1052px;" width="8" height="20" viewBox="0 0 8 20"><rect x="1" y="1" width="2" height="2" fill="#fff"/><rect x="0" y="0" width="2" height="2" fill="#cdcdcd"/><rect x="6" y="1" width="2" height="2" fill="#fff"/><rect x="5" y="0" width="2" height="2" fill="#cdcdcd"/><rect x="1" y="7" width="2" height="2" fill="#fff"/><rect x="0" y="6" width="2" height="2" fill="#cdcdcd"/><rect x="6" y="7" width="2" height="2" fill="#fff"/><rect x="5" y="6" width="2" height="2" fill="#cdcdcd"/><rect x="1" y="13" width="2" height="2" fill="#fff"/><rect x="0" y="12" width="2" height="2" fill="#cdcdcd"/><rect x="6" y="13" width="2" height="2" fill="#fff"/><rect x="5" y="12" width="2" height="2" fill="#cdcdcd"/><rect x="1" y="19" width="2" height="2" fill="#fff"/><rect x="0" y="18" width="2" height="2" fill="#cdcdcd"/><rect x="6" y="19" width="2" height="2" fill="#fff"/><rect x="5" y="18" width="2" height="2" fill="#cdcdcd"/></svg>
<svg class="a" style="left:16px;top:1047px;" width="22" height="25" viewBox="0 0 22 25"><path d="M3 1v24" stroke="#888" stroke-width="2.2"/><path d="M4 2c5-2 9 2 16 0v11c-7 2-11-2-16 0z" fill="#f2cf10" stroke="#a88a08" stroke-width="0.8"/></svg>
<div class="a tx" style="left:44px;top:1053px;font-size:17.3px;color:#222;">Параметры</div>
<svg class="a" style="left:147px;top:1057px;" width="10" height="6" viewBox="0 0 10 6"><path d="M0 0h10L5 6z" fill="#222"/></svg>
<svg class="a" style="left:794px;top:1051px;" width="8" height="18" viewBox="0 0 8 18"><rect x="1" y="1" width="2" height="2" fill="#fff"/><rect x="0" y="0" width="2" height="2" fill="#cdcdcd"/><rect x="6" y="1" width="2" height="2" fill="#fff"/><rect x="5" y="0" width="2" height="2" fill="#cdcdcd"/><rect x="1" y="7" width="2" height="2" fill="#fff"/><rect x="0" y="6" width="2" height="2" fill="#cdcdcd"/><rect x="6" y="7" width="2" height="2" fill="#fff"/><rect x="5" y="6" width="2" height="2" fill="#cdcdcd"/><rect x="1" y="13" width="2" height="2" fill="#fff"/><rect x="0" y="12" width="2" height="2" fill="#cdcdcd"/><rect x="6" y="13" width="2" height="2" fill="#fff"/><rect x="5" y="12" width="2" height="2" fill="#cdcdcd"/><rect x="1" y="19" width="2" height="2" fill="#fff"/><rect x="0" y="18" width="2" height="2" fill="#cdcdcd"/><rect x="6" y="19" width="2" height="2" fill="#fff"/><rect x="5" y="18" width="2" height="2" fill="#cdcdcd"/></svg>
<svg class="a" style="left:812px;top:1048px;" width="23" height="24" viewBox="0 0 23 24"><rect x="1" y="2" width="5" height="20" fill="#9dc0de"/><path d="M22 2v20L7 12z" fill="#9dc0de"/></svg>
<svg class="a" style="left:850px;top:1048px;" width="22" height="24" viewBox="0 0 22 24"><path d="M20 2v20L3 12z" fill="#a9c6e0"/></svg>
<div class="a" style="left:881px;top:1047px;width:1px;height:26px;background:#d2d2d2;border-right:1px solid #fafafa"></div>
<div class="a" style="left:891px;top:1048px;width:87px;height:26px;background:#fff"></div>
<div class="a tx" style="left:930px;top:1052px;font-size:16.5px;color:#111;">1</div>
<div class="a tx" style="left:985px;top:1052px;font-size:16.0px;color:#222;">из 19</div>
<div class="a" style="left:1034px;top:1047px;width:1px;height:26px;background:#d2d2d2;border-right:1px solid #fafafa"></div>
<svg class="a" style="left:1047px;top:1048px;" width="21" height="24" viewBox="0 0 21 24"><path d="M2 1v22l18-11z" fill="#2673d1"/></svg>
<svg class="a" style="left:1084px;top:1048px;" width="22" height="24" viewBox="0 0 22 24"><path d="M1 1v22l14-11z" fill="#2673d1"/><rect x="15" y="1" width="6" height="22" fill="#2673d1"/></svg>
<div class="a" style="left:1115px;top:1047px;width:1px;height:26px;background:#d2d2d2;border-right:1px solid #fafafa"></div>
<svg class="a" style="left:1124px;top:1048px;" width="23" height="23" viewBox="0 0 26 26"><defs><radialGradient id="gc11241048" cx="40%" cy="35%" r="70%"><stop offset="0" stop-color="#8fe27a"/><stop offset="0.6" stop-color="#3daa2c"/><stop offset="1" stop-color="#1d7a14"/></radialGradient></defs><g opacity="1"><circle cx="13" cy="13" r="12" fill="url(#gc11241048)"/><path d="M17 13H9M12 9l-4 4 4 4" stroke="#fff" stroke-width="3" fill="none" stroke-linecap="round" stroke-linejoin="round"/></g></svg>
<svg class="a" style="left:1162px;top:1048px;" width="23" height="23" viewBox="0 0 26 26"><defs><radialGradient id="gc11621048" cx="40%" cy="35%" r="70%"><stop offset="0" stop-color="#8fe27a"/><stop offset="0.6" stop-color="#3daa2c"/><stop offset="1" stop-color="#1d7a14"/></radialGradient></defs><g opacity="0.35"><circle cx="13" cy="13" r="12" fill="url(#gc11621048)"/><path d="M9 13h8M14 9l4 4-4 4" stroke="#fff" stroke-width="3" fill="none" stroke-linecap="round" stroke-linejoin="round"/></g></svg>
<svg class="a" style="left:1752px;top:1051px;" width="8" height="18" viewBox="0 0 8 18"><rect x="1" y="1" width="2" height="2" fill="#fff"/><rect x="0" y="0" width="2" height="2" fill="#cdcdcd"/><rect x="6" y="1" width="2" height="2" fill="#fff"/><rect x="5" y="0" width="2" height="2" fill="#cdcdcd"/><rect x="1" y="7" width="2" height="2" fill="#fff"/><rect x="0" y="6" width="2" height="2" fill="#cdcdcd"/><rect x="6" y="7" width="2" height="2" fill="#fff"/><rect x="5" y="6" width="2" height="2" fill="#cdcdcd"/><rect x="1" y="13" width="2" height="2" fill="#fff"/><rect x="0" y="12" width="2" height="2" fill="#cdcdcd"/><rect x="6" y="13" width="2" height="2" fill="#fff"/><rect x="5" y="12" width="2" height="2" fill="#cdcdcd"/><rect x="1" y="19" width="2" height="2" fill="#fff"/><rect x="0" y="18" width="2" height="2" fill="#cdcdcd"/><rect x="6" y="19" width="2" height="2" fill="#fff"/><rect x="5" y="18" width="2" height="2" fill="#cdcdcd"/></svg>
<div class="a" style="left:1765px;top:1044px;width:35px;height:35px;border:1px solid #d2bd6c;border-radius:3px;background:linear-gradient(#fdf6cf,#f6e49a)"></div>
<svg class="a" style="left:1773px;top:1048px;" width="21" height="26" viewBox="0 0 21 26"><path d="M1 1h12l7 7v17H1z" fill="#fff" stroke="#888" stroke-width="1"/><path d="M13 1v7h7" fill="#ddd" stroke="#888" stroke-width="1"/></svg>
<svg class="a" style="left:1810px;top:1047px;" width="22" height="27" viewBox="0 0 22 27"><path d="M2 0v8h19V0" fill="#fff" stroke="#888" stroke-width="1"/><path d="M2 14h12l6 5v8H2z" fill="#fff" stroke="#888" stroke-width="1"/></svg>
<svg class="a" style="left:1844px;top:1051px;" width="28" height="19" viewBox="0 0 28 19"><path d="M1 1h8l4 4v13H1zM15 1h8l4 4v13H15z" fill="#fff" stroke="#888" stroke-width="1"/></svg>
<svg class="a" style="left:1884px;top:1046px;" width="27" height="28" viewBox="0 0 27 28"><path d="M1 0v8h11V0M15 0v8h11V0M1 14h8l4 4v9H1zM15 14h8l4 4v9H15z" fill="#fff" stroke="#888" stroke-width="1"/></svg>
<svg class="a" style="left:1922px;top:1051px;" width="8" height="18" viewBox="0 0 8 18"><rect x="1" y="1" width="2" height="2" fill="#fff"/><rect x="0" y="0" width="2" height="2" fill="#cdcdcd"/><rect x="6" y="1" width="2" height="2" fill="#fff"/><rect x="5" y="0" width="2" height="2" fill="#cdcdcd"/><rect x="1" y="7" width="2" height="2" fill="#fff"/><rect x="0" y="6" width="2" height="2" fill="#cdcdcd"/><rect x="6" y="7" width="2" height="2" fill="#fff"/><rect x="5" y="6" width="2" height="2" fill="#cdcdcd"/><rect x="1" y="13" width="2" height="2" fill="#fff"/><rect x="0" y="12" width="2" height="2" fill="#cdcdcd"/><rect x="6" y="13" width="2" height="2" fill="#fff"/><rect x="5" y="12" width="2" height="2" fill="#cdcdcd"/><rect x="1" y="19" width="2" height="2" fill="#fff"/><rect x="0" y="18" width="2" height="2" fill="#cdcdcd"/><rect x="6" y="19" width="2" height="2" fill="#fff"/><rect x="5" y="18" width="2" height="2" fill="#cdcdcd"/></svg>
<svg class="a" style="left:1938px;top:1047px;" width="27" height="26" viewBox="0 0 27 26"><path d="M1 2l9 6 4-3 4 6 3-2 5 14-10-3-6-10-3 2z" fill="#f29a1c" stroke="#c4561a" stroke-width="0.8"/><path d="M13 13l10-1 3 12-9-2z" fill="#f6c024"/></svg>
<svg class="a" style="left:1976px;top:1057px;" width="10" height="6" viewBox="0 0 10 6"><path d="M0 0h10L5 6z" fill="#222"/></svg>
<div class="a" style="left:622px;top:210px;width:231px;height:41px;background:#02f502"></div>
<div class="a" style="left:622px;top:689px;width:272px;height:41px;background:#02f502"></div>
<div class="a" style="left:0;top:0;width:1992px;height:1016px;overflow:hidden">
<div class="ln j ind" style="top:208px"><span class="b" style="letter-spacing:0.76px">Коммуникация</span> (от лат. «<span class="i">communico</span>» означает</div>
<div class="ln j" style="top:256px">«совместный, общий, объединяющий, взаимный, обоюдный,</div>
<div class="ln j" style="top:304px">предполагающий обмен знаниями и ценностями» и лат.</div>
<div class="ln j" style="top:352px"><span class="i">«communication» – обмен, связь, разговор)</span> – 1) процесс</div>
<div class="ln j" style="top:400px">передачи информации; 2) составляющая актов общения, связи</div>
<div class="ln" style="top:448px;letter-spacing:1.14px">между людьми посредством передачи знаков и символов.</div>
<div class="ln j ind" style="top:496px"><span class="b" style="letter-spacing:-0.3px">Целью</span> <span class="b" style="letter-spacing:1.0px">коммуникации</span> является <span class="r">взаимопонимание</span> и</div>
<div class="ln" style="top:544px"><span class="r">взаимовоздействие</span> партнеров.</div>
<div class="ln j ind" style="top:688px"><span class="b" style="letter-spacing:0.31px">Разговорная</span> <span class="b" style="letter-spacing:0.31px">речь</span> – это спонтанная литературная речь,</div>
<div class="ln j" style="top:736px">реализуемая в неофициальных ситуациях <span class="b i" style="letter-spacing:0">при</span></div>
<div class="ln j" style="top:784px"><span class="b i" style="letter-spacing:-0.08px">непосредственном</span> <span class="b i" style="letter-spacing:-0.17px">участии</span> <span class="b i" style="letter-spacing:-0.31px">говорящих</span> с опорой на</div>
<div class="ln j" style="top:832px"><span class="b" style="letter-spacing:0.3px">прагматические</span> <span class="b" style="letter-spacing:-0.56px">условия</span> <span class="b" style="letter-spacing:0.18px">общения</span>. (<span class="b" style="letter-spacing:0.35px">Прагматика</span> – это такие</div>
<div class="ln j" style="top:880px">условия общения, которые включают определённые влияющие</div>
<div class="ln j" style="top:928px">на языковую структуру коммуникации характеристики</div>
<div class="ln" style="top:976px"><span class="b" style="letter-spacing:-0.27px">адресанта</span>, <span class="b" style="letter-spacing:-0.1px">адресата</span> и <span class="b" style="letter-spacing:-0.26px">ситуации</span>.)</div>
</div>
<div class="a" style="left:1795px;top:33px;width:324px;height:219px;overflow:hidden;background:linear-gradient(#b4b5a6,#c6c6bd 35%,#d0cfd0 60%,#c4c0c8 85%,#a9a6ae)">
  <div class="a" style="left:0;top:0;width:130px;height:219px;background:linear-gradient(90deg,rgba(160,162,150,.35),rgba(160,162,150,0))"></div>
  <!-- right wall -->
  <div class="a" style="left:243px;top:0;width:81px;height:219px;background:linear-gradient(#bdbeb0,#c2c2b8 50%,#b0b0a8)"></div>
  <div class="a" style="left:236px;top:0;width:14px;height:219px;background:linear-gradient(90deg,rgba(220,220,215,0),rgba(225,225,220,.7),rgba(180,180,170,.3))"></div>
  <!-- picture frame -->
  <div class="a" style="left:40px;top:40px;width:76px;height:52px;background:#3a3129;transform:rotate(3deg);box-shadow:0 2px 0 #c8c2b8"></div>
  <div class="a" style="left:46px;top:45px;width:64px;height:42px;background:linear-gradient(#9aa2a8,#b4b8bc 40%,#6f7470 52%,#cfd3d6 62%,#e0e2e4);transform:rotate(3deg)"></div>
  <!-- icon top right -->
  <div class="a" style="left:262px;top:-8px;width:38px;height:70px;background:linear-gradient(#5a8a8a,#8a7a52 40%,#6e5a48 70%,#8a6a50);border:3px solid #c8a838;transform:rotate(22deg)"></div>
  <!-- dark chair -->
  <div class="a" style="left:226px;top:172px;width:100px;height:50px;border-radius:14px 0 0 0;background:linear-gradient(#2a2a2a,#1c1a1a)"></div>
  <!-- hair -->
  <div class="a" style="left:121px;top:88px;width:108px;height:140px;border-radius:50px 48px 6px 6px;background:linear-gradient(#9a8a6a,#b2a27f 25%,#a89878 60%,#7a6e60)"></div>
  <!-- face -->
  <div class="a" style="left:139px;top:128px;width:76px;height:92px;border-radius:16px 16px 34px 34px;background:linear-gradient(#bca690,#ab9484 50%,#84706a)"></div>
  <!-- bangs -->
  <div class="a" style="left:134px;top:94px;width:88px;height:40px;border-radius:40px 40px 4px 20px;background:linear-gradient(#a08e6e,#b6a480)"></div>
  <!-- glasses -->
  <div class="a" style="left:143px;top:150px;width:30px;height:18px;border:2px solid #7a6a6a;border-radius:5px"></div>
  <div class="a" style="left:176px;top:149px;width:34px;height:19px;border:2px solid #7a6a6a;border-radius:5px"></div>
  <!-- clothes -->
  <div class="a" style="left:90px;top:204px;width:150px;height:18px;border-radius:30px 30px 0 0;background:linear-gradient(#4a3636,#2e2424)"></div>
  <!-- bottom dark gradient -->
  <div class="a" style="left:0;top:165px;width:324px;height:54px;background:linear-gradient(rgba(0,0,0,0),rgba(0,0,0,.5))"></div>
  <svg class="a" style="left:9px;top:170px" width="34" height="40" viewBox="0 0 34 40"><rect x="9" y="0" width="16" height="26" rx="8" fill="#fff"/><path d="M3 19c0 8 6 13 14 13s14-5 14-13" fill="none" stroke="#fff" stroke-width="3.6"/><path d="M17 32v7M11 39h12" stroke="#fff" stroke-width="3.2"/></svg>
  <div class="a tx" style="left:46px;top:168px;font-size:32.5px;color:#fff;letter-spacing:0.5px">Nagorna<span style="letter-spacing:4px">...</span></div>
</div>

<div class="a" style="left:1927px;top:474px;width:132px;height:132px;border-radius:50%;background:rgba(48,48,48,.6)"></div>
<svg class="a" style="left:1955px;top:495px;" width="76" height="90" viewBox="0 0 76 90"><rect x="25" y="9" width="26" height="51" rx="13" fill="#f0f0f0"/>
<path d="M14 46c0 15 10 25 24 25s24-10 24-25" fill="none" stroke="#f0f0f0" stroke-width="4.5"/>
<path d="M38 71v9M21 80h34" stroke="#f0f0f0" stroke-width="4.5"/>
<path d="M10 77L68 16" stroke="#d8584e" stroke-width="4.5" opacity=".85"/></svg>
<svg class="a" style="left:1976px;top:998px;" width="16" height="34" viewBox="0 0 16 34"><path d="M1.5 1.5v23.5l5.5-5.5 4.5 9.5 4-1.8-4.3-9.2h8.3z" fill="#fff" stroke="#111" stroke-width="1.6" stroke-linejoin="round"/></svg>
</body></html>
